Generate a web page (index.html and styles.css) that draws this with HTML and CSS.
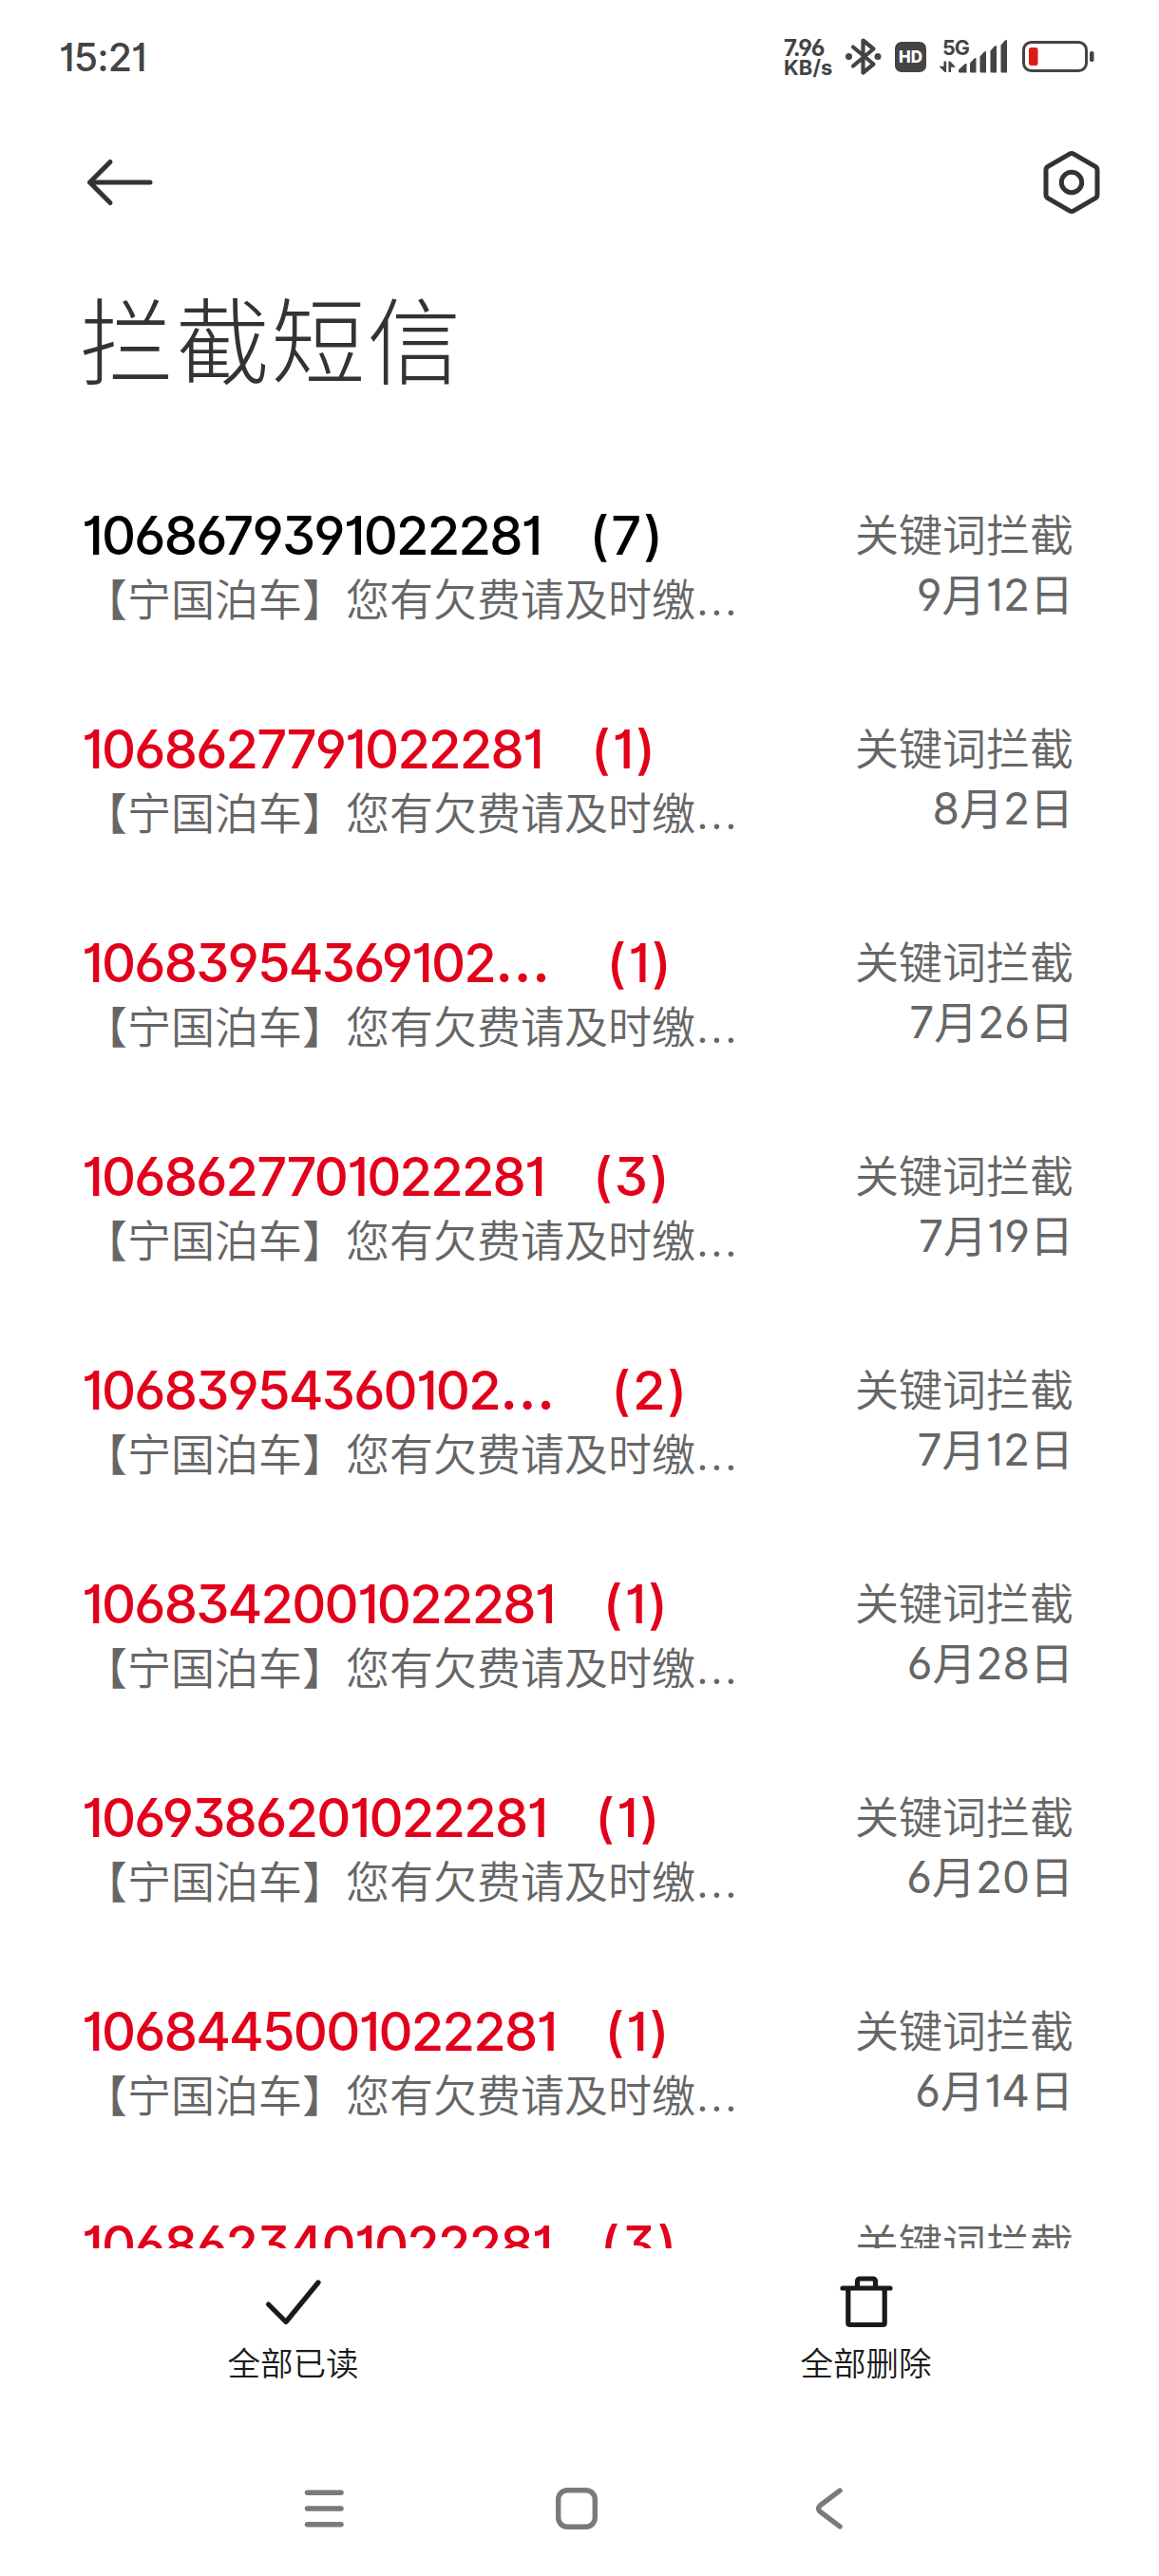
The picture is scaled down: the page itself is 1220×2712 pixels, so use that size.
FILE: index.html
```html
<!DOCTYPE html>
<html lang="zh-CN">
<head>
<meta charset="utf-8">
<title>拦截短信</title>
<link rel="stylesheet" href="styles.css">
</head>
<body>
<div class="status">
  <div class="clock">15:21</div>
  <div class="status-icons">
    <div class="speed"><span class="rate">7.96</span><span class="unit">KB/s</span></div>
    <svg class="bt" width="40" height="44" viewBox="0 0 40 44"><path d="M9 11.500 30.500 29.500 19.500 38.500V4.500L30.500 13.500 9 31.500" fill="none" stroke="#444" stroke-width="4.200" stroke-linejoin="round" stroke-linecap="round"/><circle cx="4.500" cy="21.500" r="3.500" fill="#444"/><circle cx="35" cy="21.500" r="3.500" fill="#444"/></svg>
    <div class="hd">HD</div>
    <div class="cell">
      <svg width="74" height="44" viewBox="0 0 74 44"><g fill="#444"><path d="M5.500 26.500h2.600V38H6.500L.5 31.800h5zM10.500 38V26.500h1.700l5.800 6.200h-4.900V38z"/><path d="M21 37v-1.500l7-6.500h1.500v9.500H22.500Q21 38.500 21 37zM33 37V28.500l4.500-5 2-.5v15.500H34.500Q33 38.500 33 37zM43.500 37V21.500l4.500-5 2-.5v22.500H45Q43.500 38.500 43.500 37zM54.500 37V15.500l4.500-5 2-.5v28.500H56Q54.500 38.500 54.500 37zM65.500 37V9.500l4.500-5 2-.5v34.500H67Q65.500 38.500 65.500 37z"/></g></svg>
      <span class="net">5G</span>
    </div>
    <svg class="battery" width="76" height="34" viewBox="0 0 76 34"><rect x="1.500" y="1.500" width="66" height="30" rx="8" fill="none" stroke="#444" stroke-width="3"/><rect x="7" y="7" width="9.500" height="19" rx="2.500" fill="#e01818"/><rect x="71" y="11" width="4.500" height="11" rx="1.800" fill="#444"/></svg>
  </div>
</div>
<header class="bar">
  <svg width="72" height="52" viewBox="0 0 72 52"><path d="M26 4.500 4.500 26 26 47.500M4.500 26H68" fill="none" stroke="#333" stroke-width="5" stroke-linecap="round" stroke-linejoin="round"/></svg>
  <svg width="64" height="70" viewBox="0 0 64 70"><path d="M29.800 5.200Q32 3.900 34.200 5.200L57 18.300Q59 19.500 59 21.900V48.100Q59 50.500 57 51.700L34.200 64.800Q32 66.100 29.800 64.800L7 51.700Q5 50.500 5 48.100V21.900Q5 19.500 7 18.300Z" fill="none" stroke="#333" stroke-width="5"/><circle cx="32" cy="35" r="10.700" fill="none" stroke="#333" stroke-width="5"/></svg>
</header>
<h1 class="title">拦截短信</h1>
<main class="list">
  <section class="row read"><div class="msg"><p class="num"><span>1068679391022281</span><span class="count">(7)</span></p><p class="text">【宁国泊车】您有欠费请及时缴<span class="dots">…</span></p></div><div class="meta"><p>关键词拦截</p><p class="date">9月12日</p></div></section>
  <section class="row"><div class="msg"><p class="num"><span>1068627791022281</span><span class="count">(1)</span></p><p class="text">【宁国泊车】您有欠费请及时缴<span class="dots">…</span></p></div><div class="meta"><p>关键词拦截</p><p class="date">8月2日</p></div></section>
  <section class="row cut"><div class="msg"><p class="num"><span>10683954369102<span class="more">…</span></span><span class="count">(1)</span></p><p class="text">【宁国泊车】您有欠费请及时缴<span class="dots">…</span></p></div><div class="meta"><p>关键词拦截</p><p class="date">7月26日</p></div></section>
  <section class="row"><div class="msg"><p class="num"><span>1068627701022281</span><span class="count">(3)</span></p><p class="text">【宁国泊车】您有欠费请及时缴<span class="dots">…</span></p></div><div class="meta"><p>关键词拦截</p><p class="date">7月19日</p></div></section>
  <section class="row cut"><div class="msg"><p class="num"><span>10683954360102<span class="more">…</span></span><span class="count">(2)</span></p><p class="text">【宁国泊车】您有欠费请及时缴<span class="dots">…</span></p></div><div class="meta"><p>关键词拦截</p><p class="date">7月12日</p></div></section>
  <section class="row"><div class="msg"><p class="num"><span>1068342001022281</span><span class="count">(1)</span></p><p class="text">【宁国泊车】您有欠费请及时缴<span class="dots">…</span></p></div><div class="meta"><p>关键词拦截</p><p class="date">6月28日</p></div></section>
  <section class="row"><div class="msg"><p class="num"><span>1069386201022281</span><span class="count">(1)</span></p><p class="text">【宁国泊车】您有欠费请及时缴<span class="dots">…</span></p></div><div class="meta"><p>关键词拦截</p><p class="date">6月20日</p></div></section>
  <section class="row"><div class="msg"><p class="num"><span>1068445001022281</span><span class="count">(1)</span></p><p class="text">【宁国泊车】您有欠费请及时缴<span class="dots">…</span></p></div><div class="meta"><p>关键词拦截</p><p class="date">6月14日</p></div></section>
  <section class="row"><div class="msg"><p class="num"><span>1068623401022281</span><span class="count">(3)</span></p></div><div class="meta"><p>关键词拦截</p></div></section>
</main>
<div class="actions">
  <div class="action"><svg width="64" height="64" viewBox="0 0 64 64"><path d="M5.500 35 24 53.500 58 12" fill="none" stroke="#1a1a1a" stroke-width="5.200" stroke-linecap="round" stroke-linejoin="round"/></svg><span>全部已读</span></div>
  <div class="action"><svg width="64" height="64" viewBox="0 0 64 64"><path d="M7 18H57M12.800 18V54.500Q12.800 56.500 14.800 56.500H49.200Q51.200 56.500 51.200 54.500V18M22.500 18V11Q22.500 8 25.500 8H38.500Q41.500 8 41.500 11V18" fill="none" stroke="#1a1a1a" stroke-width="5.200" stroke-linecap="round"/></svg><span>全部删除</span></div>
</div>
<nav class="nav">
  <svg width="48" height="48" viewBox="0 0 48 48"><path d="M6.500 7.300H42M6.500 24H42M6.500 40.700H42" stroke="#7a7a7a" stroke-width="5.500" stroke-linecap="round"/></svg>
  <svg width="48" height="48" viewBox="0 0 48 48"><rect x="4.700" y="4.700" width="38.600" height="38.600" rx="9.500" fill="none" stroke="#7a7a7a" stroke-width="5.400"/></svg>
  <svg width="48" height="48" viewBox="0 0 48 48"><path d="M35 5.200 14.500 20.500Q10.500 24 14.500 27.500L35 42.800" fill="none" stroke="#7a7a7a" stroke-width="5.400" stroke-linecap="round"/></svg>
</nav>
</body>
</html>
```
FILE: styles.css
```css
* { box-sizing: border-box; }
body {
  margin: 0;
  width: 1220px;
  height: 2712px;
  overflow: hidden;
  display: flex;
  flex-direction: column;
  background: #fff;
  color: #333;
  font-family: Inter, "Noto Sans CJK SC", sans-serif;
  font-feature-settings: "cv01", "cv03", "cv04", "cv09";
}
p, h1 { margin: 0; font-weight: 350; white-space: nowrap; }
svg { display: block; flex: none; }
.status {
  height: 120px;
  padding: 0 68px 0 62px;
  display: flex;
  justify-content: space-between;
  color: #444;
}
.clock {
  font-size: 41px;
  font-weight: 500;
  line-height: 120px;
  letter-spacing: -0.9px;
}
.status-icons {
  display: flex;
  height: 120px;
  align-items: center;
}
.speed {
  width: 64px;
  display: flex;
  flex-direction: column;
  font-weight: 700;
  font-size: 22px;
  line-height: 21px;
  padding-top: 2px;
}
.rate { font-size: 24px; letter-spacing: -1.2px; }
.bt { margin-right: 13px; }
.hd {
  width: 33px;
  height: 32px;
  border-radius: 7px;
  background: #444;
  color: #fff;
  font-size: 17px;
  font-weight: 800;
  line-height: 32px;
  text-align: center;
  margin-right: 13px;
}
.cell { position: relative; margin-right: 14px; }
.net {
  position: absolute;
  left: 4px;
  top: 1px;
  font-size: 21.5px;
  line-height: 22px;
  font-weight: 700;
  letter-spacing: -1px;
}
.bar {
  height: 144px;
  padding: 0 60px 0 90px;
  display: flex;
  justify-content: space-between;
  align-items: center;
}
.title {
  height: 231px;
  padding: 25px 0 0 84px;
  font-size: 99px;
  font-weight: 300;
  line-height: 144px;
  letter-spacing: 1.8px;
}
.list { height: 1872px; overflow: hidden; }
.row {
  height: 225px;
  padding: 36px 90px 0 86px;
  display: flex;
  justify-content: space-between;
}
.num {
  display: flex;
  gap: 51px;
  color: #e2001b;
  font-size: 56px;
  font-weight: 450;
  line-height: 66px;
  letter-spacing: -1.8px;
}
.more { font-size: 64px; line-height: 0; }
.count { letter-spacing: 2px; }
.read .num { color: #000; }
.cut .num { gap: 61px; }
.text {
  color: #666;
  font-size: 46px;
  line-height: 68px;
  padding-left: 2px;
}
.dots { font-size: 53px; line-height: 0; }
.meta {
  color: #666;
  padding-top: 1px;
  text-align: right;
  font-size: 46px;
  line-height: 63px;
}
.date { font-weight: 390; }
.actions {
  height: 203px;
  padding: 24px 7px 0;
  display: grid;
  grid-template-columns: 1fr 1fr;
}
.action {
  display: flex;
  flex-direction: column;
  align-items: center;
  font-size: 34.5px;
  font-weight: 350;
  color: #1a1a1a;
}
.action span { line-height: 50px; margin-top: 9px; }
.nav {
  height: 142px;
  padding: 0 323px 0 317px;
  display: flex;
  justify-content: space-between;
  align-items: center;
}
```
